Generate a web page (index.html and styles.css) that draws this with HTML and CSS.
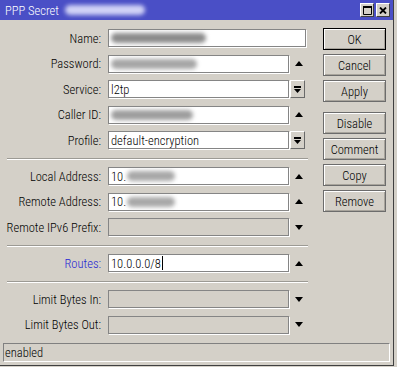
FILE: index.html
```html
<!DOCTYPE html>
<html lang="en">
<head>
<meta charset="UTF-8">
<title>PPP Secret</title>
<link rel="stylesheet" href="styles.css">
</head>
<body>
    <div class="window">
        <div class="titlebar">
            <span class="title">PPP Secret</span>
            <span class="smudge smudge-title"></span>
            <div class="tb-buttons">
                <span class="tb-btn">
                    <svg width="9" height="9" viewBox="0 0 9 9"><path d="M0.5 1.5H8.5V8.5H0.5Z" fill="none" stroke="#000"/><rect x="0" y="0" width="9" height="2"/></svg>
                </span>
                <span class="tb-btn">
                    <svg width="8" height="7" viewBox="0 0 8 7"><path d="M1 0.5L7 6.5M7 0.5L1 6.5" stroke="#000" stroke-width="1.8"/></svg>
                </span>
            </div>
        </div>

        <div class="content">
            <div class="form">
                <div class="section">
                    <div class="row">
                        <span class="label">Name:</span>
                        <div class="field wide"><span class="smudge smudge-name"></span></div>
                    </div>
                    <div class="row">
                        <span class="label">Password:</span>
                        <div class="field"><span class="smudge smudge-pass"></span></div>
                        <span class="arrow"><svg width="8" height="5" viewBox="0 0 8 5"><path d="M0 5L4 0L8 5Z"/></svg></span>
                    </div>
                    <div class="row">
                        <span class="label">Service:</span>
                        <div class="field">l2tp</div>
                        <span class="drop"><svg width="7" height="7" viewBox="0 0 7 7"><rect x="0" y="0" width="7" height="2"/><path d="M0 3H7L3.5 7Z"/></svg></span>
                    </div>
                    <div class="row">
                        <span class="label">Caller ID:</span>
                        <div class="field"><span class="smudge smudge-caller"></span></div>
                        <span class="arrow"><svg width="8" height="5" viewBox="0 0 8 5"><path d="M0 5L4 0L8 5Z"/></svg></span>
                    </div>
                    <div class="row">
                        <span class="label">Profile:</span>
                        <div class="field">default-encryption</div>
                        <span class="drop"><svg width="7" height="7" viewBox="0 0 7 7"><rect x="0" y="0" width="7" height="2"/><path d="M0 3H7L3.5 7Z"/></svg></span>
                    </div>
                </div>

                <div class="sep"></div>

                <div class="section">
                    <div class="row">
                        <span class="label">Local Address:</span>
                        <div class="field">10.<span class="smudge smudge-addr"></span></div>
                        <span class="arrow"><svg width="8" height="5" viewBox="0 0 8 5"><path d="M0 5L4 0L8 5Z"/></svg></span>
                    </div>
                    <div class="row">
                        <span class="label">Remote Address:</span>
                        <div class="field">10.<span class="smudge smudge-addr"></span></div>
                        <span class="arrow"><svg width="8" height="5" viewBox="0 0 8 5"><path d="M0 5L4 0L8 5Z"/></svg></span>
                    </div>
                    <div class="row">
                        <span class="label">Remote IPv6 Prefix:</span>
                        <div class="field off"></div>
                        <span class="arrow"><svg width="8" height="5" viewBox="0 0 8 5"><path d="M0 0H8L4 5Z"/></svg></span>
                    </div>
                </div>

                <div class="sep"></div>

                <div class="section">
                    <div class="row">
                        <span class="label blue">Routes:</span>
                        <div class="field">10.0.0.0/8<span class="caret"></span></div>
                        <span class="arrow"><svg width="8" height="5" viewBox="0 0 8 5"><path d="M0 5L4 0L8 5Z"/></svg></span>
                    </div>
                </div>

                <div class="sep"></div>

                <div class="section">
                    <div class="row">
                        <span class="label">Limit Bytes In:</span>
                        <div class="field off"></div>
                        <span class="arrow"><svg width="8" height="5" viewBox="0 0 8 5"><path d="M0 0H8L4 5Z"/></svg></span>
                    </div>
                    <div class="row">
                        <span class="label">Limit Bytes Out:</span>
                        <div class="field off"></div>
                        <span class="arrow"><svg width="8" height="5" viewBox="0 0 8 5"><path d="M0 0H8L4 5Z"/></svg></span>
                    </div>
                </div>
            </div>

            <div class="buttons">
                <div class="btn default">OK</div>
                <div class="btn">Cancel</div>
                <div class="btn group-end">Apply</div>
                <div class="btn">Disable</div>
                <div class="btn">Comment</div>
                <div class="btn">Copy</div>
                <div class="btn">Remove</div>
            </div>
        </div>

        <div class="status">enabled</div>
    </div>
</body>
</html>
```

FILE: styles.css
```css
body {
    margin: 0;
    background-color: #d4d0c8;
    font-family: "Roboto Condensed", "Open Sans", sans-serif;
    font-stretch: 75%;
    font-size: 12.5px;
    font-weight: 300;
    color: #000;
}

.window {
    width: 394px;
    height: 366px;
    box-sizing: border-box;
    border-right: 1px solid #404040;
    border-bottom: 1px solid #404040;
    background-color: #d4d0c8;
    display: flex;
    flex-direction: column;
}

/* title bar */
.titlebar {
    height: 20px;
    background-color: #4a4fc6;
    color: #fff;
    display: flex;
    align-items: center;
    padding: 0 3px 0 5px;
}

.tb-buttons {
    margin-left: auto;
    display: flex;
    gap: 2px;
}

.tb-btn {
    width: 14px;
    height: 14px;
    box-sizing: border-box;
    background-color: #d4d0c8;
    border: 1px solid;
    border-color: #fff #404040 #404040 #fff;
    display: flex;
    align-items: center;
    justify-content: center;
}

/* blurred values */
.smudge {
    display: inline-block;
    height: 10px;
    border-radius: 5px;
    background-color: #a2a2a2;
    filter: blur(2px);
}

.smudge-title {
    width: 80px;
    margin-left: 6px;
    background-color: #d0d2f6;
}

.smudge-name {
    width: 95px;
    background-color: #8c8c8c;
}

.smudge-pass {
    width: 86px;
    background-color: #a6a6a6;
}

.smudge-caller {
    width: 82px;
    background-color: #9e9e9e;
}

.smudge-addr {
    width: 48px;
    margin-left: 1px;
    background-color: #a8a8a8;
}

/* form */
.content {
    display: flex;
    padding-top: 9px;
}

.form {
    width: 309px;
}

.row {
    display: flex;
    align-items: center;
    height: 18px;
}

.row + .row {
    margin-top: 7.5px;
}

.label {
    width: 101px;
    text-align: right;
    white-space: nowrap;
}

.label.blue {
    color: #2626d4;
}

.field {
    width: 181px;
    height: 18px;
    box-sizing: border-box;
    margin-left: 7px;
    padding-left: 2px;
    border: 1px solid #858585;
    box-shadow: 1px 1px 0 #fff;
    background-color: #fff;
    display: flex;
    align-items: center;
    white-space: nowrap;
}

.field.wide {
    width: 198px;
}

.field.off {
    background-color: #d4d0c8;
}

.caret {
    display: inline-block;
    width: 1px;
    height: 14px;
    margin-left: 1px;
    background-color: #000;
}

.arrow {
    width: 19px;
    display: flex;
    justify-content: center;
}

.drop {
    width: 15px;
    height: 18px;
    box-sizing: border-box;
    margin-left: 1px;
    border: 1px solid;
    border-color: #fff #6a6a6a #6a6a6a #fff;
    display: flex;
    align-items: center;
    justify-content: center;
}

.sep {
    width: 301px;
    margin: 9px 0 7px 7px;
    border-top: 1px solid #9c9a94;
    border-bottom: 1px solid #fff;
}

/* buttons */
.buttons {
    margin-left: 14px;
    margin-top: -1px;
}

.btn {
    width: 63px;
    height: 22px;
    box-sizing: border-box;
    margin-bottom: 4px;
    border: 1px solid #6c6c6c;
    box-shadow: inset 1px 1px 0 #fff, inset -1px -1px 0 #a8a49c;
    display: flex;
    align-items: center;
    justify-content: center;
}

.btn.default {
    border-color: #000;
}

.btn.group-end {
    margin-bottom: 10px;
}

/* status bar */
.status {
    width: 387px;
    height: 19px;
    box-sizing: border-box;
    margin: auto 0 3px 3px;
    padding-left: 1px;
    border: 1px solid;
    border-color: #808080 #fff #fff #808080;
    display: flex;
    align-items: center;
}
```
